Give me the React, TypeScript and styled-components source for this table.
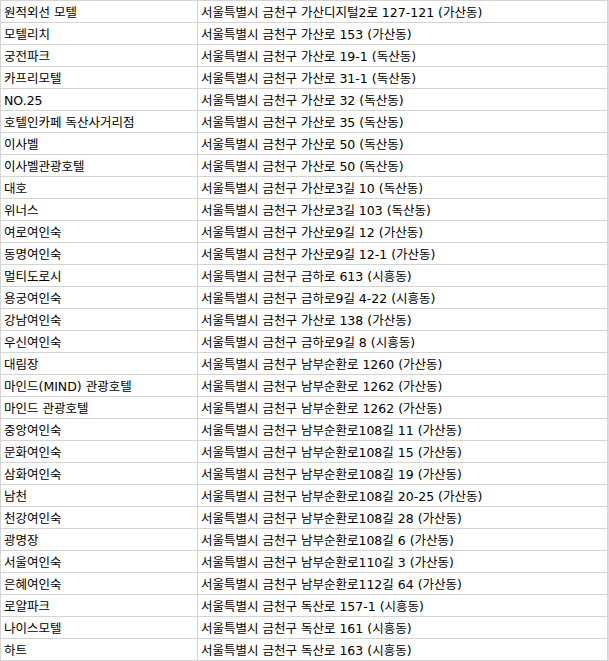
import styled, { createGlobalStyle } from "styled-components";

const GlobalStyle = createGlobalStyle`
  html, body {
    margin: 0;
    padding: 0;
    background: #ffffff;
  }
  body {
    font-family: "DejaVu Sans", "Noto Sans CJK KR", sans-serif;
  }
`;

const rows: [string, string][] = [
  ["원적외선 모텔", "서울특별시 금천구 가산디지털2로 127-121 (가산동)"],
  ["모텔리치", "서울특별시 금천구 가산로 153 (가산동)"],
  ["궁전파크", "서울특별시 금천구 가산로 19-1 (독산동)"],
  ["카프리모텔", "서울특별시 금천구 가산로 31-1 (독산동)"],
  ["NO.25", "서울특별시 금천구 가산로 32 (독산동)"],
  ["호텔인카페 독산사거리점", "서울특별시 금천구 가산로 35 (독산동)"],
  ["이사벨", "서울특별시 금천구 가산로 50 (독산동)"],
  ["이사벨관광호텔", "서울특별시 금천구 가산로 50 (독산동)"],
  ["대호", "서울특별시 금천구 가산로3길 10 (독산동)"],
  ["위너스", "서울특별시 금천구 가산로3길 103 (독산동)"],
  ["여로여인숙", "서울특별시 금천구 가산로9길 12 (가산동)"],
  ["동명여인숙", "서울특별시 금천구 가산로9길 12-1 (가산동)"],
  ["멀티도로시", "서울특별시 금천구 금하로 613 (시흥동)"],
  ["용궁여인숙", "서울특별시 금천구 금하로9길 4-22 (시흥동)"],
  ["강남여인숙", "서울특별시 금천구 가산로 138 (가산동)"],
  ["우신여인숙", "서울특별시 금천구 금하로9길 8 (시흥동)"],
  ["대림장", "서울특별시 금천구 남부순환로 1260 (가산동)"],
  ["마인드(MIND) 관광호텔", "서울특별시 금천구 남부순환로 1262 (가산동)"],
  ["마인드 관광호텔", "서울특별시 금천구 남부순환로 1262 (가산동)"],
  ["중앙여인숙", "서울특별시 금천구 남부순환로108길 11 (가산동)"],
  ["문화여인숙", "서울특별시 금천구 남부순환로108길 15 (가산동)"],
  ["삼화여인숙", "서울특별시 금천구 남부순환로108길 19 (가산동)"],
  ["남천", "서울특별시 금천구 남부순환로108길 20-25 (가산동)"],
  ["천강여인숙", "서울특별시 금천구 남부순환로108길 28 (가산동)"],
  ["광명장", "서울특별시 금천구 남부순환로108길 6 (가산동)"],
  ["서울여인숙", "서울특별시 금천구 남부순환로110길 3 (가산동)"],
  ["은혜여인숙", "서울특별시 금천구 남부순환로112길 64 (가산동)"],
  ["로얄파크", "서울특별시 금천구 독산로 157-1 (시흥동)"],
  ["나이스모텔", "서울특별시 금천구 독산로 161 (시흥동)"],
  ["하트", "서울특별시 금천구 독산로 163 (시흥동)"],
];

const Frame = styled.div`
  display: flex;
  width: 609px;
`;

const Sheet = styled.div`
  display: grid;
  grid-template-columns: 197px 410px;
  border-left: 1px solid #d4d4d4;
  border-top: 1px solid #d4d4d4;
`;

const Edge = styled.div`
  width: 1px;
  background: #d6dde8;
`;

const Cell = styled.div`
  height: 21px;
  border-right: 1px solid #d4d4d4;
  border-bottom: 1px solid #d4d4d4;
  padding-left: 3px;
  display: flex;
  align-items: flex-end;
  font-size: 12.5px;
  line-height: 19px;
  color: #000000;
  white-space: nowrap;
  overflow: hidden;
`;

export default function App() {
  return (
    <>
      <GlobalStyle />
      <Frame>
        <Sheet>
          {rows.map(([name, addr]) => [
            <Cell key={`n-${name}-${addr}`}>{name}</Cell>,
            <Cell key={`a-${name}-${addr}`}>{addr}</Cell>,
          ])}
        </Sheet>
        <Edge />
      </Frame>
    </>
  );
}
